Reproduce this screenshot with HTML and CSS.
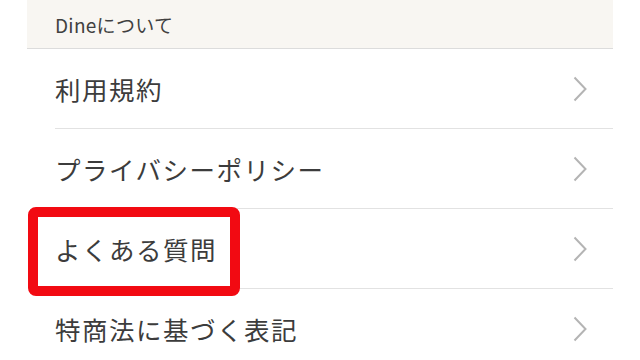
FILE: index.html
```html
<!DOCTYPE html>
<html lang="ja">
<head>
<meta charset="utf-8">
<link rel="stylesheet" href="styles.css">
</head>
<body>
<div class="page">
  <div class="section-header">Dineについて</div>
  <ul class="list">
    <li class="row"><span class="label">利用規約</span><svg class="chev" viewBox="0 0 14 26" width="14" height="26"><polyline points="1.5,1.5 12.5,13 1.5,24.5"/></svg></li>
    <li class="row"><span class="label">プライバシーポリシー</span><svg class="chev" viewBox="0 0 14 26" width="14" height="26"><polyline points="1.5,1.5 12.5,13 1.5,24.5"/></svg></li>
    <li class="row"><span class="label">よくある質問</span><svg class="chev" viewBox="0 0 14 26" width="14" height="26"><polyline points="1.5,1.5 12.5,13 1.5,24.5"/></svg></li>
    <li class="row"><span class="label">特商法に基づく表記</span><svg class="chev" viewBox="0 0 14 26" width="14" height="26"><polyline points="1.5,1.5 12.5,13 1.5,24.5"/></svg></li>
  </ul>
  <div class="highlight"></div>
</div>
</body>
</html>
```

FILE: styles.css
```css
html, body {
  margin: 0;
  padding: 0;
  background: #ffffff;
  overflow: hidden;
}
body {
  width: 640px;
  height: 360px;
  font-family: "Noto Sans CJK JP", "Noto Sans", sans-serif;
  color: #3c3c3c;
}
.page {
  position: relative;
  margin: 0 27px;
  height: 360px;
}
.section-header {
  height: 49px;
  box-sizing: border-box;
  background: #f8f6f2;
  border-bottom: 1px solid #dcdcdc;
  padding: 12px 0 0 28px;
  font-size: 19px;
  line-height: 26px;
  letter-spacing: 0.3px;
  color: #404040;
}
.list {
  list-style: none;
  margin: 0 0 0 28px;
  padding: 0;
}
.row {
  display: flex;
  align-items: center;
  justify-content: space-between;
  height: 80px;
  box-sizing: border-box;
  border-bottom: 1px solid #e2e2e2;
  padding: 0 26px 0 0;
}
.label {
  font-size: 25.5px;
  line-height: 30px;
  letter-spacing: 1.5px;
}
.chev {
  display: block;
  fill: none;
  stroke: #b4b4b4;
  stroke-width: 2;
}
.highlight {
  position: absolute;
  left: 1px;
  top: 207px;
  width: 212px;
  height: 89px;
  box-sizing: border-box;
  border: 10px solid #f20a12;
  border-radius: 8px;
}
```
